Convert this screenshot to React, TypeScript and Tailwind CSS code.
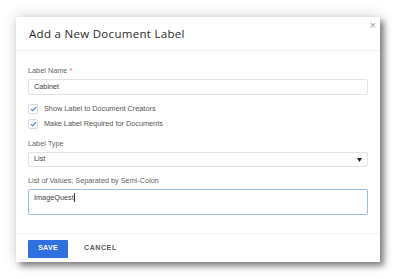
function Check() {
    return (
        <span className="w-[10px] h-[10px] border border-[#dcdcdc] rounded-[2px] bg-white flex items-center justify-center">
            <svg width="7" height="6" viewBox="0 0 8 7" fill="none">
                <path d="M1 3.6 L3 5.6 L7 1.2" stroke="#3b7be0" strokeWidth="1.3" />
            </svg>
        </span>
    )
}

export default function App() {
    return (
        <div className="w-[397px] h-[279px] bg-white pt-[17px] pl-[16px]" style={{ fontFamily: "'Liberation Sans', Arial, sans-serif" }}>
            <div className="relative w-[364px] h-[245px] bg-white flex flex-col shadow-[4px_4px_6px_rgba(0,0,0,0.45),0_0_14px_rgba(0,0,0,0.18)]">
                <span className="absolute right-[4px] top-[3px] text-[11px] leading-none text-[#a0a0a0] font-light">×</span>
                <div className="h-[34px] border-b border-[#efefef] flex items-center pl-[13px] pt-[1px]">
                    <h1 className="text-[11.5px] font-medium text-[#2a2a2a] tracking-[0.3px]" style={{ fontFamily: "'Open Sans', sans-serif" }}>
                        Add a New Document Label
                    </h1>
                </div>
                <div className="flex-1 px-[12px] pt-[15px] text-[7.3px] text-[#555]">
                    <div className="h-[10px] leading-[10px] text-[#666]">
                        Label Name <span className="text-[#e06060]">*</span>
                    </div>
                    <div className="mt-[3px] h-[16px] border border-[#e3e3e3] rounded-[2px] flex items-center px-[5px] text-[#444]">Cabinet</div>
                    <div className="mt-[8px] flex items-center gap-[6px] h-[12px]">
                        <Check />
                        <span>Show Label to Document Creators</span>
                    </div>
                    <div className="mt-[3px] flex items-center gap-[6px] h-[12px]">
                        <Check />
                        <span>Make Label Required for Documents</span>
                    </div>
                    <div className="mt-[9px] h-[10px] leading-[10px] text-[#666]">Label Type</div>
                    <div className="mt-[3px] h-[15px] border border-[#e3e3e3] rounded-[2px] flex items-center justify-between px-[5px] text-[#444]">
                        <span>List</span>
                        <svg width="5" height="4" viewBox="0 0 5 4"><path d="M0 0 H5 L2.5 4 Z" fill="#222" /></svg>
                    </div>
                    <div className="mt-[9px] h-[10px] leading-[10px] text-[#666]">List of Values; Separated by Semi-Colon</div>
                    <div className="mt-[3px] h-[26px] border border-[#9dbaf0] rounded-[2px] px-[5px] pt-[3px] text-[#444] flex items-start">
                        <span>ImageQuest</span>
                        <span className="w-px h-[9px] bg-[#333]" />
                    </div>
                </div>
                <div className="h-[29px] border-t border-[#f0f0f0] flex items-center pl-[12px] pt-[1px] gap-[16px]">
                    <button className="w-[40px] h-[18px] bg-[#2f6fe0] text-white text-[7px] font-bold tracking-[0.3px] rounded-[1px]">SAVE</button>
                    <button className="text-[7px] font-bold tracking-[0.6px] text-[#555]">CANCEL</button>
                </div>
            </div>
        </div>
    )
}
